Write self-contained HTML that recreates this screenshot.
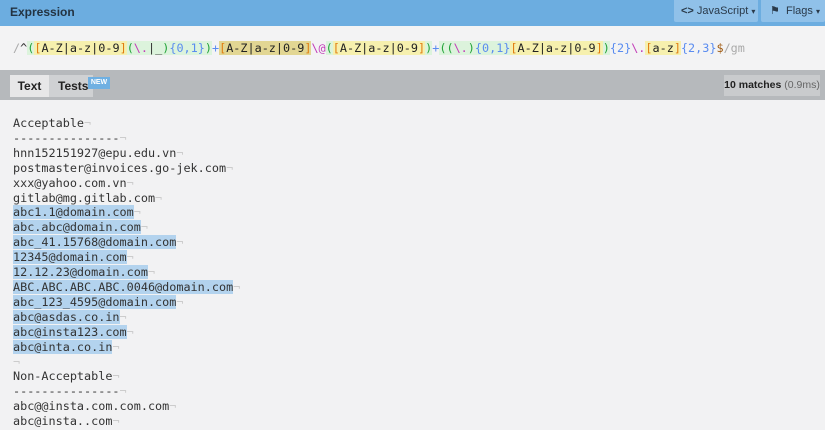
<!DOCTYPE html>
<html><head><meta charset="utf-8"><style>
*{margin:0;padding:0;box-sizing:border-box}
body{width:825px;height:430px;overflow:hidden;background:#f2f2f3;font-family:"Liberation Sans",sans-serif;position:relative}
.hdr{position:absolute;left:0;top:0;width:825px;height:26px;background:#6cade0}
.hdr .t{position:absolute;left:10px;top:5px;font-size:12px;font-weight:bold;color:#233342}
.btn{position:absolute;top:0;height:22px;background:#90c1e9;color:#2a3a4a;font-size:11px;line-height:22px;border-radius:0 0 2px 2px;white-space:nowrap;overflow:hidden}
.expr{position:absolute;left:0;top:26px;width:825px;height:44px;background:#f3f3f4}
.mono{font-family:"DejaVu Sans Mono","Liberation Mono",monospace;font-size:11.8px}
.re{position:absolute;left:13px;top:40px;white-space:pre;color:#333;line-height:16px}
.s{background:#f6f0ae;color:#222}.s b{color:#e07d10;font-weight:normal}
.s2{background:#e2d693}
.g{background:#dcf3dc}.gp{color:#24a43a}
.q{color:#5a8cf0}.e{color:#c23cb8}.d{color:#a05a10}.f{color:#aaa}
.bar{position:absolute;left:0;top:70px;width:825px;height:30px;background:#b6b9bc}
.tab{position:absolute;top:5px;height:22px;font-size:12px;font-weight:bold;color:#222;line-height:22px;text-align:center;white-space:nowrap}
.txt{position:absolute;left:13px;top:116px;white-space:pre;color:#333;line-height:14.9px}
.h{background:#b3d3ee}
.n{color:#ccc}
</style></head><body>
<div class="hdr"><div class="t">Expression</div>
<div class="btn" style="left:674px;width:84px;padding-left:7px"><b>&lt;&gt;</b>&nbsp;JavaScript <span style="font-size:8px">▾</span></div>
<div class="btn" style="left:761px;width:64px;padding-left:9px">⚑&nbsp; Flags <span style="font-size:8px">▾</span></div>
</div>
<div class="expr"></div>
<div class="re mono"><span class="f">/</span>^<span class="g"><span class="gp">(</span><span class="s"><b>[</b>A-Z|a-z|0-9<b>]</b></span><span class="gp">(</span><span class="e">\.</span>|_<span class="gp">)</span><span class="q">{0,1}</span><span class="gp">)</span></span><span class="q">+</span><span class="s s2"><b>[</b>A-Z|a-z|0-9<b>]</b></span><span class="e">\@</span><span class="g"><span class="gp">(</span><span class="s"><b>[</b>A-Z|a-z|0-9<b>]</b></span><span class="gp">)</span></span><span class="q">+</span><span class="g"><span class="gp">(</span><span class="gp">(</span><span class="e">\.</span><span class="gp">)</span><span class="q">{0,1}</span><span class="s"><b>[</b>A-Z|a-z|0-9<b>]</b></span><span class="gp">)</span></span><span class="q">{2}</span><span class="e">\.</span><span class="s"><b>[</b>a-z<b>]</b></span><span class="q">{2,3}</span><span class="d">$</span><span class="f">/gm</span></div>
<div class="bar">
<div class="tab" style="left:10px;width:39px;background:#e7e7e8">Text</div>
<div class="tab" style="left:49px;width:44px;background:#cfd1d3;text-align:left;padding-left:9px">Tests</div>
<div style="position:absolute;left:88px;top:7px;width:22px;height:12px;background:#6fb0e2;color:#fff;font-size:7px;font-weight:bold;text-align:center;line-height:12px">NEW</div>
<div style="position:absolute;left:724px;top:5px;width:96px;height:21px;background:#c9cbcd;font-size:10.5px;line-height:21px;text-align:center;color:#222;white-space:nowrap"><b>10 matches</b> <span style="color:#666">(0.9ms)</span></div>
</div>
<div class="txt mono">Acceptable<span class="n">¬</span>
---------------<span class="n">¬</span>
hnn152151927@epu.edu.vn<span class="n">¬</span>
postmaster@invoices.go-jek.com<span class="n">¬</span>
xxx@yahoo.com.vn<span class="n">¬</span>
gitlab@mg.gitlab.com<span class="n">¬</span>
<span class="h">abc1.1@domain.com</span><span class="n">¬</span>
<span class="h">abc.abc@domain.com</span><span class="n">¬</span>
<span class="h">abc_41.15768@domain.com</span><span class="n">¬</span>
<span class="h">12345@domain.com</span><span class="n">¬</span>
<span class="h">12.12.23@domain.com</span><span class="n">¬</span>
<span class="h">ABC.ABC.ABC.ABC.0046@domain.com</span><span class="n">¬</span>
<span class="h">abc_123_4595@domain.com</span><span class="n">¬</span>
<span class="h">abc@asdas.co.in</span><span class="n">¬</span>
<span class="h">abc@insta123.com</span><span class="n">¬</span>
<span class="h">abc@inta.co.in</span><span class="n">¬</span>
<span class="n">¬</span>
Non-Acceptable<span class="n">¬</span>
---------------<span class="n">¬</span>
abc@@insta.com.com.com<span class="n">¬</span>
abc@insta..com<span class="n">¬</span>
</div>
</body></html>
